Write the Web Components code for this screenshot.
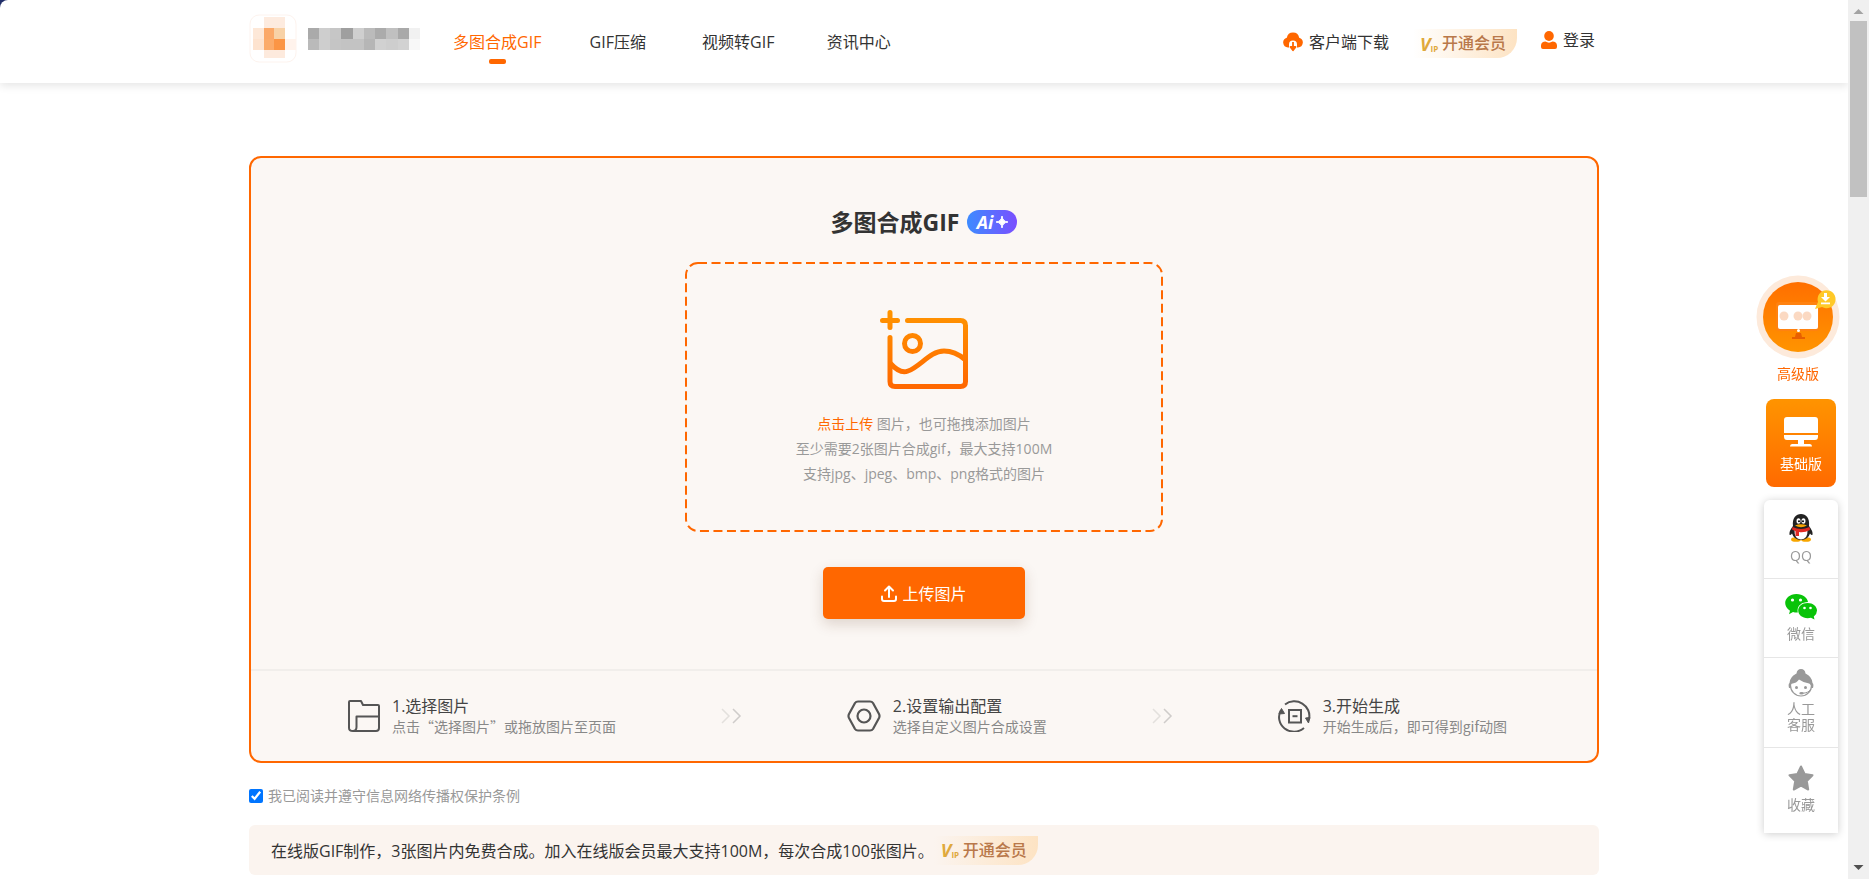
<!DOCTYPE html>
<html lang="zh-CN">
<head>
<meta charset="utf-8">
<meta name="viewport" content="width=device-width, initial-scale=1">
<title>多图合成GIF</title>
<style>
  :root {
    --orange: #ff6700;
    --text: #333;
    --muted: #999;
    --panel: #fbf7f4;
    --bar: 21px;
  }
  html { background: #22306b; }
  body {
    margin: 0;
    font-family: "Open Sans", "Noto Sans CJK SC", sans-serif;
    font-size: 16px;
    color: var(--text);
  }
</style>
</head>
<body>
<gif-page>
  <site-header slot="header">
    <nav-link href="#merge" active>多图合成GIF</nav-link>
    <nav-link href="#compress">GIF压缩</nav-link>
    <nav-link href="#video">视频转GIF</nav-link>
    <nav-link href="#news">资讯中心</nav-link>
  </site-header>

  <upload-card>
    <step-item slot="steps" icon="folder" heading="1.选择图片">点击“选择图片”或拖放图片至页面</step-item>
    <step-arrow slot="steps"></step-arrow>
    <step-item slot="steps" icon="nut" heading="2.设置输出配置">选择自定义图片合成设置</step-item>
    <step-arrow slot="steps"></step-arrow>
    <step-item slot="steps" icon="cycle" heading="3.开始生成">开始生成后，即可得到gif动图</step-item>
  </upload-card>
  <agree-check>我已阅读并遵守信息网络传播权保护条例</agree-check>
  <notice-bar>在线版GIF制作，3张图片内免费合成。加入在线版会员最大支持100M，每次合成100张图片。</notice-bar>

  <side-tools slot="side">
    <side-item icon="qq">QQ</side-item>
    <side-item icon="wechat">微信</side-item>
    <side-item icon="service" tall>人工<br>客服</side-item>
    <side-item icon="star" last>收藏</side-item>
  </side-tools>
  <page-scrollbar slot="side"></page-scrollbar>
</gif-page>

<script>
// All drawings used by the elements below
const ICONS = {
  cloud: `<svg width="20" height="21" viewBox="0 0 20 21">
    <path d="M5 16.500A5 5 0 0 1 3.800 6.700A6.300 6.300 0 0 1 16.200 6.700A5 5 0 0 1 15 16.500H14V13.500A4 4 0 0 0 6 13.500V16.500Z" fill="#ff6700"/>
    <path d="M10 11v7M7.500 16l2.500 3.300L12.500 16z" stroke="#ff6700" stroke-width="1.800" fill="#ff6700" stroke-linejoin="round"/></svg>`,
  user: `<svg width="16" height="18" viewBox="0 0 16 18" fill="#ff6700"><ellipse cx="8" cy="5" rx="4.800" ry="5"/>
    <path d="M0 18v-3.500C0 12 2 10.500 4.500 10.500Q8 12.800 11.500 10.500C14 10.500 16 12 16 14.500V16Q16 18 14 18H2Q0 18 0 16Z"/></svg>`,
  folder: `<svg width="32" height="32" viewBox="0 0 32 32" fill="none" stroke="#555" stroke-width="2" stroke-linejoin="round">
    <path d="M5 31Q1 31 1 28V2Q1 1 2 1H13L15 5H30Q31 5 31 6V28Q31 31 28 31H5Q8.500 31 8.500 27V16.500H31"/></svg>`,
  nut: `<svg width="34" height="32" viewBox="0 0 34 32" fill="none" stroke="#555" stroke-width="2.200" stroke-linejoin="round">
    <path d="M11 1.500H23Q25 1.500 26 3L32 14Q33 16 32 18L26 29Q25 30.500 23 30.500H11Q9 30.500 8 29L2 18Q1 16 2 14L8 3Q9 1.500 11 1.500Z"/>
    <circle cx="17" cy="16" r="6.500"/></svg>`,
  cycle: `<svg width="33" height="32" viewBox="0 0 33 32" fill="none" stroke="#555" stroke-width="2">
    <path d="M7 4.500A15 14.500 0 0 1 31 19M26 28A15 14.500 0 0 1 3 10"/>
    <path d="M1 14L3.500 8.500L6.500 13.500ZM27.500 18L30.500 23L32 17.500Z" fill="#555" stroke-width="1"/>
    <rect x="11" y="10" width="12" height="12.500"/><path d="M14.500 16.200h5"/></svg>`,
  picture: `<svg width="88" height="79" viewBox="0 0 88 79" fill="none" stroke="url(#pg)" stroke-width="5" stroke-linecap="round" stroke-linejoin="round">
    <defs><linearGradient id="pg" gradientUnits="userSpaceOnUse" x1="0" y1="0" x2="0" y2="79"><stop stop-color="#ff9500"/><stop offset="1" stop-color="#ff6600"/></linearGradient></defs>
    <path d="M2.500 10.500H17.500M10 2.500V17.500M27.500 10.500H80.500Q85.500 10.500 85.500 15.500V71.500Q85.500 76.500 80.500 76.500H15Q10 76.500 10 71.500V27.500"/>
    <circle cx="32.500" cy="33.500" r="8"/>
    <path d="M11 54Q20 64 28 61C40 57 50 41 64 41Q75 41 85 49.500"/></svg>`,
  upload: `<svg width="16" height="17" viewBox="0 0 16 17" fill="none" stroke="#fff" stroke-width="2" stroke-linecap="round" stroke-linejoin="round">
    <path d="M8 12V2M4 5.500L8 1.500L12 5.500M1 11.500V14Q1 16 3 16H13Q15 16 15 14V11.500"/></svg>`,
  qq: `<svg width="24" height="28" viewBox="0 0 24 28">
    <ellipse cx="7" cy="25.500" rx="5" ry="2.300" fill="#f7a600"/><ellipse cx="17" cy="25.500" rx="5" ry="2.300" fill="#f7a600"/>
    <path d="M4 12C3 4 7 0 12 0S21 4 20 12Q24 17 23.500 20.500Q23 22 21 19.500Q19 26 12 26T3 19.500Q1 22 .5 20.500Q0 17 4 12Z" fill="#222"/>
    <path d="M5.500 16Q5 25 12 25.500Q19 25 18.500 16Z" fill="#fff"/>
    <path d="M3.500 13Q12 17 20.500 13L21 16Q15 19 10 18V22H6.500V17.200L3 15.500Z" fill="#e02a22"/>
    <ellipse cx="9.500" cy="7" rx="2" ry="2.800" fill="#fff"/><ellipse cx="14.500" cy="7" rx="2" ry="2.800" fill="#fff"/>
    <circle cx="10" cy="7.300" r="1"/><circle cx="14" cy="7.300" r="1"/>
    <path d="M6 11.500Q12 9 18 11.500Q12 15 6 11.500Z" fill="#f7a600"/></svg>`,
  wechat: `<svg width="32" height="26" viewBox="0 0 32 26" fill="#09c309">
    <path d="M11.500 0C18 0 22.500 4 23 8C16 8 11.500 12.500 12.800 18.500Q10.500 18.700 8 18L4 20.300L5 16.700C-4 11 .5 0 11.500 0Z"/>
    <path d="M22.500 9C28 9 32 12.500 32 16.500Q32 20 28.800 22.500L29.500 25.500L26 23.800C19 25.500 13.200 21.500 13.200 16.500C13.200 12.500 17 9 22.500 9Z"/>
    <g fill="#fff"><circle cx="7.500" cy="6" r="1.600"/><circle cx="15.500" cy="6" r="1.600"/><circle cx="19.500" cy="14" r="1.300"/><circle cx="25.500" cy="14" r="1.300"/></g></svg>`,
  service: `<svg width="26" height="28" viewBox="0 0 26 28">
    <circle cx="13" cy="16.500" r="10.500" fill="#fff" stroke="#999" stroke-width="1.200"/>
    <path d="M8.500 4.500Q9 0 13 0T17.500 4.500Q24 7.500 24.500 14Q26 15 25 19H23.500Q23 15 21 14.500Q15 13.500 11 10.500Q9 14 2.800 15L2.500 19H1Q0 15 1.500 14Q2 7.500 8.500 4.500Z" fill="#999"/>
    <circle cx="8.500" cy="18.500" r="1.500" fill="#999"/><circle cx="17.500" cy="18.500" r="1.500" fill="#999"/>
    <path d="M23 20Q21 24 14 24.300" fill="none" stroke="#999"/><ellipse cx="13.500" cy="24.200" rx="2.200" ry="1.300" fill="#999"/></svg>`,
  star: `<svg width="26" height="26" viewBox="0 0 26 26"><path d="M13 1.500L16.600 9L24.500 10.200L18.800 16L20.200 24.500L13 20.700L5.800 24.500L7.200 16L1.500 10.200L9.400 9Z"
    fill="#999" stroke="#999" stroke-width="2" stroke-linejoin="round"/></svg>`,
  pro: `<svg width="84" height="84" viewBox="0 0 84 84">
    <defs><linearGradient id="cg" x1="0" y1="0" x2="0" y2="1"><stop stop-color="#ff6f00"/><stop offset="1" stop-color="#ff9400"/></linearGradient></defs>
    <circle cx="42" cy="42" r="41.500" fill="#fdeadb"/><circle cx="42" cy="42" r="35" fill="url(#cg)"/>
    <rect x="20" y="27" width="43" height="29" rx="3" fill="#ff8210"/>
    <rect x="22" y="30" width="40" height="24" rx="2" fill="#fff"/>
    <g fill="#fbd9c2"><circle cx="28" cy="41" r="4.500"/><circle cx="42" cy="41" r="4.500"/><circle cx="51" cy="41" r="4.500"/></g>
    <path d="M40 58h5l1 4h3v2H36v-2h3z" fill="#e85f00"/><circle cx="42.500" cy="55.500" r="1.500" fill="#fff"/>
    <path d="M59 34L62 27A9 9 0 1 1 66 32Z" fill="#ffc928"/>
    <path d="M68 18h3v4h3l-4.500 4.500L65 22h3zM65 27.500h9v1.700h-9z" fill="#fff"/></svg>`,
  monitor: `<svg width="34" height="30" viewBox="0 0 34 30" fill="#fff"><path d="M3 0H31Q34 0 34 3V16H0V3Q0 0 3 0ZM0 18H34V19.500Q34 23 31 23H20V27H26Q28 27 28 29.500H6Q6 27 8 27H14V23H3Q0 23 0 19.500Z"/></svg>`
};

// Small helper: opens the shadow root and fills it
function render(element, css, html) {
  const shadow = element.attachShadow({mode: "open"});
  shadow.innerHTML = `<style>${css}</style>${html}`;
  return shadow;
}

class GifPage extends HTMLElement {
  constructor() {
    super();
    render(this, `
      :host {
        display: block;
        min-height: 100vh;
        box-sizing: border-box;
        padding-right: var(--bar);
        background: #fff;
        border-top-left-radius: 8px;
      }
      main {
        max-width: 1350px;
        margin: 0 auto;
        padding: 73px 24px 4px;
      }
    `, `<slot name="header"></slot><main><slot></slot></main><slot name="side"></slot>`);
  }
}

class SiteHeader extends HTMLElement {
  constructor() {
    super();
    render(this, `
      :host { display: block; box-shadow: 0 3px 8px rgba(0, 0, 0, .1); border-top-left-radius: 8px; }
      header {
        display: flex;
        align-items: center;
        box-sizing: border-box;
        max-width: 1350px;
        height: 83px;
        margin: 0 auto;
      }
      .logo { flex: none; margin-left: -7px; }
      nav { display: grid; grid-template-columns: repeat(4, 1fr); width: 482px; margin-left: 16px; }
      .user { display: flex; align-items: center; margin-left: auto; }
      .user a { display: flex; align-items: center; gap: 6px; color: inherit; text-decoration: none; line-height: 24px; white-space: nowrap; }
      vip-link { margin: 4px 24px 0; }
      .user .login { margin: 0 4px 4px 0; }
    `, `
      <header>
        <svg class="logo" width="179" height="56" viewBox="242 15 179 56" role="img" aria-label="logo" shape-rendering="crispEdges">
          <rect x="250" y="16" width="46" height="47" rx="9" fill="#fff" stroke="#fdf3ee" shape-rendering="auto"/>
          <g class="cells"></g>
        </svg>
        <nav><slot></slot></nav>
        <div class="user">
          <a href="#client">${ICONS.cloud}客户端下载</a>
          <vip-link></vip-link>
          <a class="login" href="#login">${ICONS.user}登录</a>
        </div>
      </header>`);

    // mosaic logo: x, y, width, height, colour
    const cells = [
      [264, 18, 21, 11, "#fdebdf"], [253, 29, 11, 11, "#fde8d8"], [264, 29, 10, 11, "#fba969"],
      [274, 29, 11, 11, "#f8d2a7"], [253, 40, 11, 11, "#fde3cf"], [264, 40, 10, 11, "#fbab6a"],
      [274, 40, 11, 11, "#fb9545"], [285, 40, 11, 11, "#fff3ec"], [264, 51, 21, 8, "#fdeadd"]
    ];
    const grays = [
      ["#aaa", "#cecece", "#c6c6c6", "#9f9f9f", "#cfcfcf", "#bbb", "#ababab", "#c0c0c0", "#a9a9a9", "#f1f1f1"],
      ["#bababa", "#cecece", "#c5c5c5", "#c3c3c3", "#c3c3c3", "#b6b6b6", "#d1d1d1", "#cecece", "#d2d2d2", "#f8f8f8"]
    ];
    const edges = [308, 319, 330, 341, 353, 364, 375, 386, 398, 409, 420];
    grays.forEach((row, r) => row.forEach((color, i) => {
      cells.push([edges[i], 29 + r * 11, edges[i + 1] - edges[i], 11, color]);
    }));
    this.shadowRoot.querySelector(".cells").innerHTML = cells.map(([x, y, w, h, color]) =>
      `<rect x="${x}" y="${y}" width="${w}" height="${h}" fill="${color}"/>`).join("");
  }
}

class NavLink extends HTMLElement {
  constructor() {
    super();
    render(this, `
      :host { display: block; text-align: center; }
      a {
        position: relative;
        display: inline-block;
        color: inherit;
        line-height: 24px;
        text-decoration: none;
        white-space: nowrap;
      }
      :host([active]) a { color: var(--orange); }
      :host([active]) a::after {
        content: "";
        position: absolute;
        left: 50%;
        bottom: -10px;
        width: 17px;
        height: 5px;
        margin-left: -8px;
        border-radius: 2px;
        background: var(--orange);
      }
    `, `<a href="${this.getAttribute("href")}"><slot></slot></a>`);
  }
}

class VipLink extends HTMLElement {
  constructor() {
    super();
    render(this, `
      :host { display: block; flex: none; }
      a {
        display: flex;
        align-items: center;
        width: 104px;
        height: 29px;
        box-sizing: border-box;
        padding-left: 7px;
        border-radius: 0 0 20px 0;
        background: linear-gradient(90deg, #fde3c300, #fde3c3);
        color: #b9784a;
        font-weight: 500;
        line-height: 29px;
        text-decoration: none;
        white-space: nowrap;
      }
      b { display: flex; align-items: flex-end; width: 22px; color: #dfa93c; font-size: 18px; font-style: italic; line-height: 18px; }
      small { font-size: 8px; font-style: normal; line-height: 9px; }
    `, `<a href="#vip"><b><span>V</span><small>IP</small></b><span>开通会员</span></a>`);
  }
}

class UploadCard extends HTMLElement {
  constructor() {
    super();
    render(this, `
      :host {
        display: block;
        border: 2px solid var(--orange);
        border-radius: 12px;
        background: var(--panel);
      }
      .top { display: flex; flex-direction: column; align-items: center; padding: 39px 0 50px; }
      .title { display: flex; align-items: center; gap: 8px; margin-bottom: 15px; }
      h1 { margin: 0; font-size: 23px; line-height: 50px; }
      .ai {
        display: flex;
        align-items: center;
        justify-content: center;
        gap: 3px;
        width: 50px;
        height: 24px;
        border-radius: 12px;
        background: linear-gradient(90deg, #3d8bff, #7a4fff);
        color: #fff;
        font-size: 18px;
        font-style: italic;
        font-weight: 700;
        line-height: 24px;
      }
      .drop {
        position: relative;
        display: flex;
        flex-direction: column;
        align-items: center;
        box-sizing: border-box;
        width: 478px;
        max-width: 100%;
        padding: 48px 0 46px;
        color: var(--muted);
        font-size: 14px;
        line-height: 25px;
        text-align: center;
      }
      .drop p { margin: 22px 0 0; }
      .drop a { color: var(--orange); text-decoration: none; }
      .dash { position: absolute; inset: 0; width: 100%; height: 100%; overflow: visible; pointer-events: none; }
      button {
        display: flex;
        align-items: center;
        justify-content: center;
        gap: 5px;
        width: 202px;
        height: 52px;
        margin-top: 35px;
        border: 0;
        border-radius: 5px;
        background: var(--orange);
        box-shadow: 0 5px 14px rgba(90, 50, 20, .18);
        color: #fff;
        font: inherit;
        cursor: pointer;
      }
      .steps {
        display: flex;
        align-items: center;
        justify-content: space-between;
        min-height: 90px;
        padding: 0 90px 0 97px;
        border-top: 2px solid #f1eeeb;
      }
    `, `
      <div class="top">
        <div class="title">
          <h1>多图合成GIF</h1>
          <span class="ai">Ai<svg width="12" height="12" viewBox="0 0 12 12"><path d="M6 0Q6.500 5.500 12 6Q6.500 6.500 6 12Q5.500 6.500 0 6Q5.500 5.500 6 0Z" fill="#fff" stroke="#fff"/></svg></span>
        </div>
        <div class="drop">
          <svg class="dash" viewBox="0 0 478 270" preserveAspectRatio="none"><rect x="1" y="1" width="476" height="268" rx="12" fill="none" stroke="#ff6700" stroke-width="2" stroke-dasharray="9 4.500"/></svg>
          ${ICONS.picture}
          <p><a href="#upload">点击上传</a> 图片，也可拖拽添加图片<br>至少需要2张图片合成gif，最大支持100M<br>支持jpg、jpeg、bmp、png格式的图片</p>
        </div>
        <button type="button">${ICONS.upload}上传图片</button>
      </div>
      <div class="steps"><slot name="steps"></slot></div>`);
  }
}

class StepItem extends HTMLElement {
  constructor() {
    super();
    render(this, `
      :host { display: flex; align-items: center; gap: 12px; }
      svg { flex: none; }
      h2 { margin: 0; color: #444; font-size: 16px; font-weight: 400; line-height: 20px; }
      /* CJK face first, it has the full-width quotes */
      p { margin: 0; color: #888; font-family: "Noto Sans CJK SC", sans-serif; font-size: 14px; line-height: 20px; }
    `, `${ICONS[this.getAttribute("icon")]}
      <div><h2>${this.getAttribute("heading")}</h2><p><slot></slot></p></div>`);
  }
}

class StepArrow extends HTMLElement {
  constructor() {
    super();
    render(this, `:host { display: block; } svg { display: block; }`, `
      <svg width="21" height="16" viewBox="0 0 21 16" fill="none" stroke-width="1.500">
        <path d="M1 1L8 8L1 15" stroke="#e3e0dd"/><path d="M12 1L19 8L12 15" stroke="#cfccca"/>
      </svg>`);
  }
}

class AgreeCheck extends HTMLElement {
  constructor() {
    super();
    render(this, `
      :host { display: block; margin: 20px 0 16px; }
      label { display: flex; align-items: center; gap: 5px; color: var(--muted); font-size: 14px; line-height: 26px; }
      input { width: 14px; height: 14px; margin: 0; accent-color: #0075ff; }
    `, `<label><input type="checkbox" checked><span><slot></slot></span></label>`);
  }
}

class NoticeBar extends HTMLElement {
  constructor() {
    super();
    render(this, `
      :host {
        display: flex;
        align-items: center;
        min-height: 50px;
        padding: 0 22px;
        border-radius: 6px;
        background: #fbf4ef;
      }
    `, `<span><slot></slot></span><vip-link></vip-link>`);
  }
}

class SideTools extends HTMLElement {
  constructor() {
    super();
    render(this, `
      :host {
        position: fixed;
        top: 275px;
        right: calc(var(--bar) + 8px);
        display: flex;
        flex-direction: column;
        align-items: flex-end;
        width: 84px;
        font-size: 14px;
      }
      a { display: flex; flex-direction: column; align-items: center; text-decoration: none; }
      .pro { color: var(--orange); line-height: 30px; }
      .basic {
        gap: 6px;
        width: 70px;
        height: 88px;
        box-sizing: border-box;
        padding-top: 18px;
        margin: 10px 4px 13px 0;
        border-radius: 8px;
        background: linear-gradient(#ff9400, #ff6a00);
        color: #fff;
        line-height: 22px;
      }
      .list {
        width: 74px;
        margin-right: 2px;
        border-radius: 6px 6px 0 0;
        background: #fff;
        box-shadow: 0 1px 8px rgba(0, 0, 0, .2);
      }
    `, `
      <a class="pro" href="#pro">${ICONS.pro}高级版</a>
      <a class="basic" href="#basic">${ICONS.monitor}基础版</a>
      <div class="list"><slot></slot></div>`);
  }
}

class SideItem extends HTMLElement {
  constructor() {
    super();
    render(this, `
      :host { display: block; }
      a {
        display: flex;
        flex-direction: column;
        align-items: center;
        justify-content: center;
        gap: 6px;
        height: 78px;
        color: var(--muted);
        line-height: 16px;
        text-align: center;
        text-decoration: none;
      }
      :host(:not([last])) { border-bottom: 1px solid #e6e6e6; }
      :host([tall]) a { height: 89px; gap: 4px; padding-bottom: 4px; box-sizing: border-box; }
      :host([last]) a { height: 85px; padding-bottom: 4px; box-sizing: border-box; }
    `, `<a href="#${this.getAttribute("icon")}">${ICONS[this.getAttribute("icon")]}<span><slot></slot></span></a>`);
  }
}

class PageScrollbar extends HTMLElement {
  constructor() {
    super();
    render(this, `
      :host {
        position: fixed;
        top: 0;
        right: 0;
        bottom: 0;
        display: flex;
        flex-direction: column;
        align-items: center;
        width: var(--bar);
        background: #f0f0f0;
      }
      svg { flex: none; display: block; }
      .track { flex: 1; width: 17px; }
      .thumb { height: 21%; background: #c1c1c1; }
    `, `
      <svg width="21" height="21"><path d="M5.500 14L10.500 9L15.500 14Z" fill="#a3a3a3"/></svg>
      <div class="track"><div class="thumb"></div></div>
      <svg width="21" height="21"><path d="M5.500 7L10.500 12L15.500 7Z" fill="#505050"/></svg>`);
  }
}

customElements.define('gif-page', GifPage);
customElements.define('site-header', SiteHeader);
customElements.define('nav-link', NavLink);
customElements.define('vip-link', VipLink);
customElements.define('upload-card', UploadCard);
customElements.define('step-item', StepItem);
customElements.define('step-arrow', StepArrow);
customElements.define('agree-check', AgreeCheck);
customElements.define('notice-bar', NoticeBar);
customElements.define('side-tools', SideTools);
customElements.define('side-item', SideItem);
customElements.define('page-scrollbar', PageScrollbar);
</script>
</body>
</html>
